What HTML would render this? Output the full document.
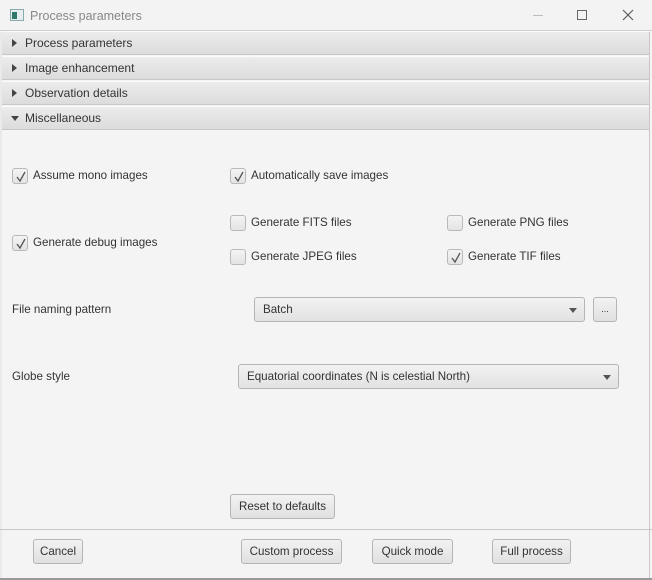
<!DOCTYPE html>
<html><head><style>
*{box-sizing:border-box;margin:0;padding:0}
body{width:652px;height:580px;overflow:hidden;background:#f4f4f4;font-family:"Liberation Sans",sans-serif;font-size:11.6px;color:#333;position:relative}
.a{position:absolute}
.title{left:0;top:0;width:652px;height:31px;background:#f3f3f3;border-bottom:1px solid #cfcfcf}
.hdr{left:2px;width:647px;height:24px;background:linear-gradient(#ececec,#dcdcdc);border-bottom:1px solid #c8c8c8;border-top:1px solid #fafafa}
.hdr span{position:absolute;left:23px;top:4px;color:#333;font-size:12px}
.tri{position:absolute;left:10px;top:7px;width:0;height:0;border-top:4px solid transparent;border-bottom:4px solid transparent;border-left:5px solid #444}
.tri.d{left:9px;top:9px;border-left:4px solid transparent;border-right:4px solid transparent;border-top:5px solid #444;border-bottom:0}
.cb{width:16px;height:16px;border:1px solid #b9b9b9;border-radius:3px;background:linear-gradient(#f4f4f4,#e3e3e3)}
.cb svg{position:absolute;left:2px;top:2px}
.lbl{color:#333}
.btn{height:25px;border:1px solid #b5b5b5;border-radius:3px;background:linear-gradient(#f2f2f2,#e0e0e0);text-align:center;line-height:23px;color:#333}
.combo{height:25px;border:1px solid #b5b5b5;border-radius:3px;background:linear-gradient(#f2f2f2,#e2e2e2)}
.combo span{position:absolute;left:8px;top:5px}
.arr{position:absolute;top:10px;width:0;height:0;border-left:4px solid transparent;border-right:4px solid transparent;border-top:5px solid #555}
</style></head><body>
<div class="a title">
 <div class="a" style="left:10px;top:9px;width:14px;height:12px;border:1px solid #8aa;background:#e6eef0"><div class="a" style="left:1px;top:2px;width:5px;height:7px;background:#2e7a6a"></div></div>
 <div class="a" style="left:30px;top:9px;font-size:12.5px;color:#888">Process parameters</div>
 <div class="a" style="left:533px;top:15px;width:10px;height:1px;background:#bbb"></div>
 <div class="a" style="left:577px;top:10px;width:10px;height:10px;border:1px solid #666"></div>
 <svg class="a" style="left:622px;top:9px" width="12" height="12"><path d="M1 1L11 11M11 1L1 11" stroke="#555" stroke-width="1.1"/></svg>
</div>
<div class="a" style="left:0;top:32px;width:2px;height:548px;background:#eaeaea"></div>
<div class="a" style="left:649px;top:32px;width:1px;height:548px;background:#c8c8c8"></div>
<div class="a hdr" style="top:31px"><div class="tri"></div><span>Process parameters</span></div>
<div class="a hdr" style="top:56px"><div class="tri"></div><span>Image enhancement</span></div>
<div class="a hdr" style="top:81px"><div class="tri"></div><span>Observation details</span></div>
<div class="a hdr" style="top:106px"><div class="tri d"></div><span>Miscellaneous</span></div>

<div class="a cb" style="left:12px;top:168px"><svg width="12" height="12"><path d="M2 6L5 10L10 1" stroke="#555" stroke-width="1.3" fill="none"/></svg></div>
<div class="a lbl" style="left:33px;top:169px">Assume mono images</div>
<div class="a cb" style="left:230px;top:168px"><svg width="12" height="12"><path d="M2 6L5 10L10 1" stroke="#555" stroke-width="1.3" fill="none"/></svg></div>
<div class="a lbl" style="left:251px;top:169px">Automatically save images</div>

<div class="a cb" style="left:12px;top:235px"><svg width="12" height="12"><path d="M2 6L5 10L10 1" stroke="#555" stroke-width="1.3" fill="none"/></svg></div>
<div class="a lbl" style="left:33px;top:236px">Generate debug images</div>
<div class="a cb" style="left:230px;top:215px"></div>
<div class="a lbl" style="left:251px;top:216px">Generate FITS files</div>
<div class="a cb" style="left:447px;top:215px"></div>
<div class="a lbl" style="left:468px;top:216px">Generate PNG files</div>
<div class="a cb" style="left:230px;top:249px"></div>
<div class="a lbl" style="left:251px;top:250px">Generate JPEG files</div>
<div class="a cb" style="left:447px;top:249px"><svg width="12" height="12"><path d="M2 6L5 10L10 1" stroke="#555" stroke-width="1.3" fill="none"/></svg></div>
<div class="a lbl" style="left:468px;top:250px">Generate TIF files</div>

<div class="a lbl" style="left:12px;top:303px">File naming pattern</div>
<div class="a combo" style="left:254px;top:297px;width:331px"><span>Batch</span><div class="arr" style="left:314px"></div></div>
<div class="a btn" style="left:593px;top:297px;width:24px;font-size:9px">...</div>

<div class="a lbl" style="left:12px;top:370px">Globe style</div>
<div class="a combo" style="left:238px;top:364px;width:381px"><span>Equatorial coordinates (N is celestial North)</span><div class="arr" style="left:364px"></div></div>

<div class="a btn" style="left:230px;top:494px;width:105px">Reset to defaults</div>
<div class="a" style="left:0;top:529px;width:652px;height:1px;background:#c8c8c8"></div>
<div class="a btn" style="left:33px;top:539px;width:50px">Cancel</div>
<div class="a btn" style="left:241px;top:539px;width:101px">Custom process</div>
<div class="a btn" style="left:372px;top:539px;width:81px">Quick mode</div>
<div class="a btn" style="left:492px;top:539px;width:79px">Full process</div>
<div class="a" style="left:0;top:578px;width:652px;height:2px;background:#999"></div>
</body></html>
